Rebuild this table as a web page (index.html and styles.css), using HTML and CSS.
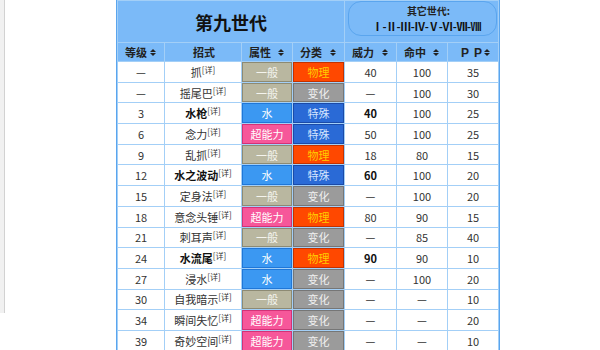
FILE: index.html
```html
<!DOCTYPE html>
<html lang="zh">
<head>
<meta charset="utf-8">
<link rel="stylesheet" href="styles.css">
</head>
<body>
<div class="strip"></div>
<div class="content">
<table class="moves">
  <colgroup>
    <col class="c1"><col class="c2"><col class="c3"><col class="c4"><col class="c5"><col class="c6"><col class="c7">
  </colgroup>
  <thead>
    <tr class="title-row">
      <th colspan="4" class="title">第九世代</th>
      <th colspan="3" class="gens-cell">
        <div class="gens">
          <div class="gens-label">其它世代:</div>
          <div class="gens-list">Ⅰ-Ⅱ-Ⅲ-Ⅳ-Ⅴ-Ⅵ-Ⅶ-Ⅷ</div>
        </div>
      </th>
    </tr>
    <tr class="head-row">
      <th><span class="hl">等级</span><span class="sort"></span></th>
      <th class="center">招式</th>
      <th><span class="hl">属性</span><span class="sort"></span></th>
      <th><span class="hl">分类</span><span class="sort"></span></th>
      <th><span class="hl">威力</span><span class="sort"></span></th>
      <th><span class="hl">命中</span><span class="sort"></span></th>
      <th><span class="hl pp">P P</span><span class="sort"></span></th>
    </tr>
  </thead>
  <tbody>
    <tr><td>—</td><td>抓<sup>[详]</sup></td><td class="t normal">一般</td><td class="t phys">物理</td><td>40</td><td>100</td><td>35</td></tr>
    <tr><td>—</td><td>摇尾巴<sup>[详]</sup></td><td class="t normal">一般</td><td class="t stat">变化</td><td>—</td><td>100</td><td>30</td></tr>
    <tr><td>3</td><td class="b">水枪<sup>[详]</sup></td><td class="t water">水</td><td class="t spec">特殊</td><td class="b">40</td><td>100</td><td>25</td></tr>
    <tr><td>6</td><td>念力<sup>[详]</sup></td><td class="t psy">超能力</td><td class="t spec">特殊</td><td>50</td><td>100</td><td>25</td></tr>
    <tr><td>9</td><td>乱抓<sup>[详]</sup></td><td class="t normal">一般</td><td class="t phys">物理</td><td>18</td><td>80</td><td>15</td></tr>
    <tr><td>12</td><td class="b">水之波动<sup>[详]</sup></td><td class="t water">水</td><td class="t spec">特殊</td><td class="b">60</td><td>100</td><td>20</td></tr>
    <tr><td>15</td><td>定身法<sup>[详]</sup></td><td class="t normal">一般</td><td class="t stat">变化</td><td>—</td><td>100</td><td>20</td></tr>
    <tr><td>18</td><td>意念头锤<sup>[详]</sup></td><td class="t psy">超能力</td><td class="t phys">物理</td><td>80</td><td>90</td><td>15</td></tr>
    <tr><td>21</td><td>刺耳声<sup>[详]</sup></td><td class="t normal">一般</td><td class="t stat">变化</td><td>—</td><td>85</td><td>40</td></tr>
    <tr><td>24</td><td class="b">水流尾<sup>[详]</sup></td><td class="t water">水</td><td class="t phys">物理</td><td class="b">90</td><td>90</td><td>10</td></tr>
    <tr><td>27</td><td>浸水<sup>[详]</sup></td><td class="t water">水</td><td class="t stat">变化</td><td>—</td><td>100</td><td>20</td></tr>
    <tr><td>30</td><td>自我暗示<sup>[详]</sup></td><td class="t normal">一般</td><td class="t stat">变化</td><td>—</td><td>—</td><td>10</td></tr>
    <tr><td>34</td><td>瞬间失忆<sup>[详]</sup></td><td class="t psy">超能力</td><td class="t stat">变化</td><td>—</td><td>—</td><td>20</td></tr>
    <tr><td>39</td><td>奇妙空间<sup>[详]</sup></td><td class="t psy">超能力</td><td class="t stat">变化</td><td>—</td><td>—</td><td>10</td></tr>
  </tbody>
</table>
</div>
</body>
</html>
```
FILE: styles.css
```css
html, body {
  margin: 0;
  padding: 0;
  background: #ffffff;
}
body {
  display: flex;
  align-items: flex-start;
  font-family: "Noto Sans CJK SC", "Noto Sans", sans-serif;
  color: #333;
}
.strip {
  width: 4px;
  height: 313px;
  background: #f1f1f1;
  border-right: 1px solid #d2d2d2;
  flex: none;
}
.content {
  margin-left: 111px;
}
.moves {
  border-collapse: separate;
  border-spacing: 1px;
  background: #a3cff7;
  border: 1px solid #5aa5ee;
  border-top: none;
  table-layout: fixed;
  width: 381px;
  font-size: 11px;
}
.c1 { width: 46px; }
.c2 { width: 76px; }
.c3 { width: 50px; }
.c4 { width: 51px; }
.c5 { width: 51px; }
.c6 { width: 50px; }
.c7 { width: 50px; }

.title-row th {
  background: #7bbaf8;
  height: 41px;
  padding: 0;
}
.title {
  font-size: 18px;
  font-weight: 700;
  color: #111;
  text-align: center;
  padding-left: 2px;
}
.gens-cell {
  vertical-align: top;
}
.gens {
  margin: 0 1px 0 3px;
  border: 1px solid #5aa5ee;
  border-radius: 13px;
  height: 33px;
  display: flex;
  flex-direction: column;
  align-items: center;
  justify-content: center;
  padding-left: 8px;
}
.gens-label {
  font-size: 10px;
  font-weight: 700;
  color: #222;
  line-height: 15px;
  padding-left: 4px;
}
.gens-list {
  font-size: 11px;
  font-weight: 700;
  color: #111;
  line-height: 17px;
  font-family: "Noto Sans CJK SC", sans-serif;
  letter-spacing: -0.5px;
}
.head-row th {
  background: #7bbaf8;
  height: 18px;
  padding: 0 5px 0 7px;
  font-size: 11px;
  font-weight: 700;
  color: #222;
  text-align: left;
  white-space: nowrap;
}
.head-row th.center {
  text-align: center;
}
.head-row th .hl {
  display: inline-block;
}
.head-row th .pp {
  font-family: "Liberation Sans", sans-serif;
  font-size: 12px;
  letter-spacing: 1px;
  padding-left: 6px;
}
.sort {
  float: right;
  margin-top: 5px;
  width: 0;
  height: 0;
  position: relative;
  border-left: 3px solid transparent;
  border-right: 3px solid transparent;
  border-bottom: 3px solid #222;
  margin-right: 3px;
}
.sort::after {
  content: "";
  position: absolute;
  left: -3px;
  top: 4px;
  border-left: 3px solid transparent;
  border-right: 3px solid transparent;
  border-top: 3px solid #222;
}
tbody td {
  background: #ffffff;
  height: 19.7px;
  padding: 0;
  text-align: center;
  font-size: 11px;
  color: #333;
  white-space: nowrap;
}
tbody td.b {
  font-weight: 700;
  color: #111;
}
sup {
  font-size: 8px;
  vertical-align: 4px;
  line-height: 0;
  font-weight: 400;
  color: #333;
}
td.t {
  box-sizing: border-box;
  border: 1px solid;
  color: #fff;
}
td.normal { background: #b9b7a0; border-color: #8d8a73; color: #f4f4ee; }
td.water  { background: #3b98f2; border-color: #1f77d8; color: #ffffff; }
td.psy    { background: #f6579a; border-color: #d23276; color: #ffffff; }
td.phys   { background: #ff4800; border-color: #c23200; color: #ffcc00; }
td.stat   { background: #9b9b9b; border-color: #767676; color: #f0f0f0; }
td.spec   { background: #2a6ad6; border-color: #1a4aa8; color: #d6e6ff; }
```
